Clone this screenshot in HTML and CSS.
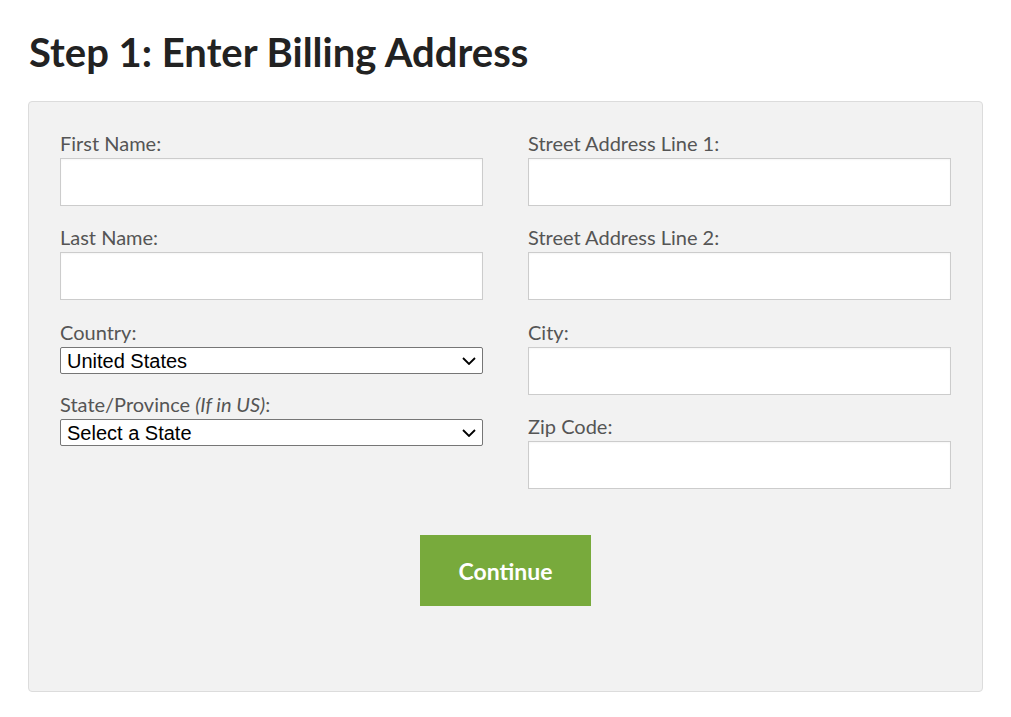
FILE: index.html
```html
<!DOCTYPE html>
<html>
<head>
<meta charset="utf-8">
<link rel="stylesheet" href="styles.css">
</head>
<body>
<h1 class="title">Step 1: Enter Billing Address</h1>
<form class="panel">
  <div class="cols">
    <div class="col">
      <div class="field">
        <label class="label">First Name:</label>
        <input class="text" type="text">
      </div>
      <div class="field">
        <label class="label">Last Name:</label>
        <input class="text" type="text">
      </div>
      <div class="field field-sel">
        <label class="label">Country:</label>
        <div class="selwrap">
          <select class="sel"><option>United States</option></select>
          <svg class="chev" width="14" height="8" viewBox="0 0 14 8"><path d="M1 1 L7 7 L13 1" fill="none" stroke="#000" stroke-width="1.8"/></svg>
        </div>
      </div>
      <div class="field field-sel">
        <label class="label">State/Province <em>(If in US)</em>:</label>
        <div class="selwrap">
          <select class="sel"><option>Select a State</option></select>
          <svg class="chev" width="14" height="8" viewBox="0 0 14 8"><path d="M1 1 L7 7 L13 1" fill="none" stroke="#000" stroke-width="1.8"/></svg>
        </div>
      </div>
    </div>
    <div class="col">
      <div class="field">
        <label class="label">Street Address Line 1:</label>
        <input class="text" type="text">
      </div>
      <div class="field">
        <label class="label">Street Address Line 2:</label>
        <input class="text" type="text">
      </div>
      <div class="field">
        <label class="label">City:</label>
        <input class="text" type="text">
      </div>
      <div class="field">
        <label class="label">Zip Code:</label>
        <input class="text" type="text">
      </div>
    </div>
  </div>
  <div class="actions">
    <button class="btn" type="button">Continue</button>
  </div>
</form>
</body>
</html>
```
FILE: styles.css
```css
html, body {
  margin: 0;
  padding: 0;
  background: #fff;
}
body {
  padding: 0 28px;
  font-family: Lato, "Liberation Sans", sans-serif;
}
.title {
  margin: 0;
  padding-top: 28px;
  height: 101px;
  box-sizing: border-box;
  font-family: Lato, sans-serif;
  font-weight: 700;
  font-size: 40px;
  line-height: 48px;
  color: #222;
  padding-left: 1px;
}
.panel {
  display: block;
  width: 955px;
  height: 591px;
  box-sizing: border-box;
  background: #f2f2f2;
  border: 1px solid #dcdcdc;
  border-radius: 4px;
  padding: 32px 31px 0 31px;
}
.cols {
  display: flex;
  gap: 45px;
}
.col {
  flex: 1;
  display: flex;
  flex-direction: column;
}
.field {
  display: flex;
  flex-direction: column;
  margin-bottom: 22px;
}
.field:nth-child(3) {
  margin-top: 1px;
}
.field-sel {
  margin-bottom: 21px;
}
.label {
  font-size: 20px;
  line-height: 18px;
  padding-bottom: 6px;
  color: #555;
}
.label em {
  font-style: italic;
}
.text {
  height: 48px;
  box-sizing: border-box;
  border: 1px solid #cccccc;
  background: #fff;
  margin: 0;
  padding: 0 10px;
  box-shadow: inset 0 1px 2px rgba(0,0,0,0.04);
}
.selwrap {
  position: relative;
  display: flex;
  flex-direction: column;
}
.sel {
  -webkit-appearance: none;
  appearance: none;
  height: 27px;
  box-sizing: border-box;
  margin: 0;
  border: 1px solid #767676;
  border-radius: 2px;
  background: #fff;
  font-family: "Liberation Sans", Arial, sans-serif;
  font-size: 20px;
  color: #000;
  padding: 0 30px 0 6px;
}
.chev {
  position: absolute;
  right: 7px;
  top: 10px;
  pointer-events: none;
}
.actions {
  display: flex;
  justify-content: center;
  padding-top: 24px;
}
.btn {
  width: 171px;
  height: 71px;
  border: 0;
  background: #78aa3c;
  color: #fff;
  font-family: Lato, sans-serif;
  font-weight: 700;
  font-size: 23px;
}
```
